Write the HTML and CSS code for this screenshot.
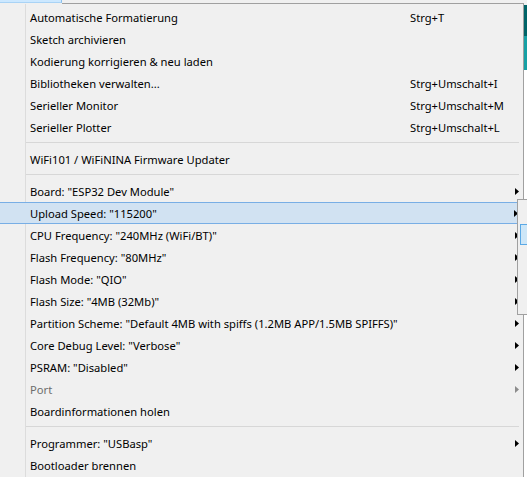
FILE: index.html
```html
<!DOCTYPE html>
<html lang="de">
<head>
<meta charset="utf-8">
<link rel="stylesheet" href="styles.css">
</head>
<body>
<div class="screen">
  <div class="menubar">
    <div class="menubar-tab"></div>
    <div class="menubar-rest"></div>
  </div>
  <div class="main">
    <div class="menu">
      <div class="item"><span class="label">Automatische Formatierung</span><span class="shortcut">Strg+T</span><span class="arrow-slot"></span></div>
      <div class="item"><span class="label">Sketch archivieren</span><span class="shortcut"></span><span class="arrow-slot"></span></div>
      <div class="item"><span class="label">Kodierung korrigieren &amp; neu laden</span><span class="shortcut"></span><span class="arrow-slot"></span></div>
      <div class="item"><span class="label">Bibliotheken verwalten...</span><span class="shortcut">Strg+Umschalt+I</span><span class="arrow-slot"></span></div>
      <div class="item"><span class="label">Serieller Monitor</span><span class="shortcut">Strg+Umschalt+M</span><span class="arrow-slot"></span></div>
      <div class="item"><span class="label">Serieller Plotter</span><span class="shortcut">Strg+Umschalt+L</span><span class="arrow-slot"></span></div>
      <div class="separator"></div>
      <div class="item"><span class="label">WiFi101 / WiFiNINA Firmware Updater</span><span class="shortcut"></span><span class="arrow-slot"></span></div>
      <div class="separator"></div>
      <div class="item"><span class="label">Board: "ESP32 Dev Module"</span><span class="shortcut"></span><span class="arrow-slot"><svg class="arrow" width="4" height="7" viewBox="0 0 4 7"><polygon points="0,0 4,3.5 0,7"/></svg></span></div>
      <div class="item item-active"><span class="label">Upload Speed: "115200"</span><span class="shortcut"></span><span class="arrow-slot"><svg class="arrow" width="4" height="7" viewBox="0 0 4 7"><polygon points="0,0 4,3.5 0,7"/></svg></span></div>
      <div class="item"><span class="label">CPU Frequency: "240MHz (WiFi/BT)"</span><span class="shortcut"></span><span class="arrow-slot"><svg class="arrow" width="4" height="7" viewBox="0 0 4 7"><polygon points="0,0 4,3.5 0,7"/></svg></span></div>
      <div class="item"><span class="label">Flash Frequency: "80MHz"</span><span class="shortcut"></span><span class="arrow-slot"><svg class="arrow" width="4" height="7" viewBox="0 0 4 7"><polygon points="0,0 4,3.5 0,7"/></svg></span></div>
      <div class="item"><span class="label">Flash Mode: "QIO"</span><span class="shortcut"></span><span class="arrow-slot"><svg class="arrow" width="4" height="7" viewBox="0 0 4 7"><polygon points="0,0 4,3.5 0,7"/></svg></span></div>
      <div class="item"><span class="label">Flash Size: "4MB (32Mb)"</span><span class="shortcut"></span><span class="arrow-slot"><svg class="arrow" width="4" height="7" viewBox="0 0 4 7"><polygon points="0,0 4,3.5 0,7"/></svg></span></div>
      <div class="item"><span class="label">Partition Scheme: "Default 4MB with spiffs (1.2MB APP/1.5MB SPIFFS)"</span><span class="shortcut"></span><span class="arrow-slot"><svg class="arrow" width="4" height="7" viewBox="0 0 4 7"><polygon points="0,0 4,3.5 0,7"/></svg></span></div>
      <div class="item"><span class="label">Core Debug Level: "Verbose"</span><span class="shortcut"></span><span class="arrow-slot"><svg class="arrow" width="4" height="7" viewBox="0 0 4 7"><polygon points="0,0 4,3.5 0,7"/></svg></span></div>
      <div class="item"><span class="label">PSRAM: "Disabled"</span><span class="shortcut"></span><span class="arrow-slot"><svg class="arrow" width="4" height="7" viewBox="0 0 4 7"><polygon points="0,0 4,3.5 0,7"/></svg></span></div>
      <div class="item item-disabled"><span class="label">Port</span><span class="shortcut"></span><span class="arrow-slot"><svg class="arrow" width="4" height="7" viewBox="0 0 4 7"><polygon points="0,0 4,3.5 0,7"/></svg></span></div>
      <div class="item"><span class="label">Boardinformationen holen</span><span class="shortcut"></span><span class="arrow-slot"></span></div>
      <div class="separator"></div>
      <div class="item"><span class="label">Programmer: "USBasp"</span><span class="shortcut"></span><span class="arrow-slot"><svg class="arrow" width="4" height="7" viewBox="0 0 4 7"><polygon points="0,0 4,3.5 0,7"/></svg></span></div>
      <div class="item"><span class="label">Bootloader brennen</span><span class="shortcut"></span><span class="arrow-slot"></span></div>
    </div>
    <div class="ide-edge">
      <div class="ide-gap"></div>
      <div class="ide-toolbar"></div>
      <div class="ide-tabs"></div>
      <div class="ide-editor"></div>
    </div>
  </div>
  <div class="submenu">
    <div class="sub-item"></div>
    <div class="sub-item sub-item-active"></div>
  </div>
</div>
</body>
</html>
```
FILE: styles.css
```css
html, body {
  margin: 0;
  padding: 0;
}
body {
  background: #f0f0f0;
  font-family: "Noto Sans", "Open Sans", sans-serif;
  font-size: 11.2px;
  color: #000;
}
.screen {
  position: relative;
  width: 527px;
  height: 477px;
  overflow: hidden;
  background: #f0f0f0;
}
.menubar {
  display: flex;
  align-items: flex-start;
  height: 4px;
  width: 524px;
}
.menubar-tab {
  box-sizing: border-box;
  width: 62px;
  height: 3px;
  background: #cce8ff;
  border-right: 1px solid #8cc0ec;
  border-bottom: 1px solid #a9d3f5;
}
.menubar-rest {
  flex: 1;
  box-sizing: border-box;
  height: 4px;
  border-bottom: 1px solid #a0a0a0;
}
.main {
  display: flex;
  align-items: stretch;
  height: 473px;
}
.menu {
  box-sizing: border-box;
  width: 524px;
  padding-top: 2px;
  border-right: 1px solid #a0a0a0;
  background: linear-gradient(to right, #f0f0f0 25px, #dcdcdc 25px, #dcdcdc 26px, #f0f0f0 26px);
}
.item {
  display: flex;
  align-items: center;
  box-sizing: border-box;
  height: 22px;
  line-height: 21px;
  padding-left: 30px;
  padding-right: 4px;
  padding-top: 1px;
  white-space: nowrap;
}
.label {
  flex: 0 0 380px;
}
.shortcut {
  flex: 1;
}
.arrow-slot {
  flex: 0 0 4px;
  height: 7px;
  display: flex;
}
.arrow {
  display: block;
  fill: #000;
}
.item-active {
  background: #d1e2f2;
  border: 1px solid #78aee5;
  border-left: none;
  margin-right: 2px;
  padding-right: 2px;
  padding-top: 0;
}
.item-disabled {
  color: #6d6d6d;
}
.item-disabled .arrow {
  fill: #8c8c8c;
}
.separator {
  height: 10px;
  box-sizing: border-box;
  margin-left: 26px;
  margin-right: 4px;
  background: linear-gradient(to bottom, transparent 4px, #d7d7d7 4px, #d7d7d7 5px, transparent 5px);
}
.ide-edge {
  flex: 1;
  display: flex;
  flex-direction: column;
}
.ide-gap {
  height: 1px;
  background: #f0f0f0;
}
.ide-toolbar {
  height: 31px;
  background: #006468;
}
.ide-tabs {
  height: 34px;
  background: #17a1a5;
}
.ide-editor {
  flex: 1;
  background: #ffffff;
}
.submenu {
  position: absolute;
  left: 517px;
  top: 199px;
  width: 30px;
  height: 116px;
  box-sizing: border-box;
  border: 1px solid #a0a0a0;
  background: #f0f0f0;
  padding: 2px 0 0 2px;
}
.sub-item {
  height: 22px;
}
.sub-item-active {
  box-sizing: border-box;
  height: 21px;
  background: #cde6f7;
  border: 1px solid #5aa9e6;
}
```
